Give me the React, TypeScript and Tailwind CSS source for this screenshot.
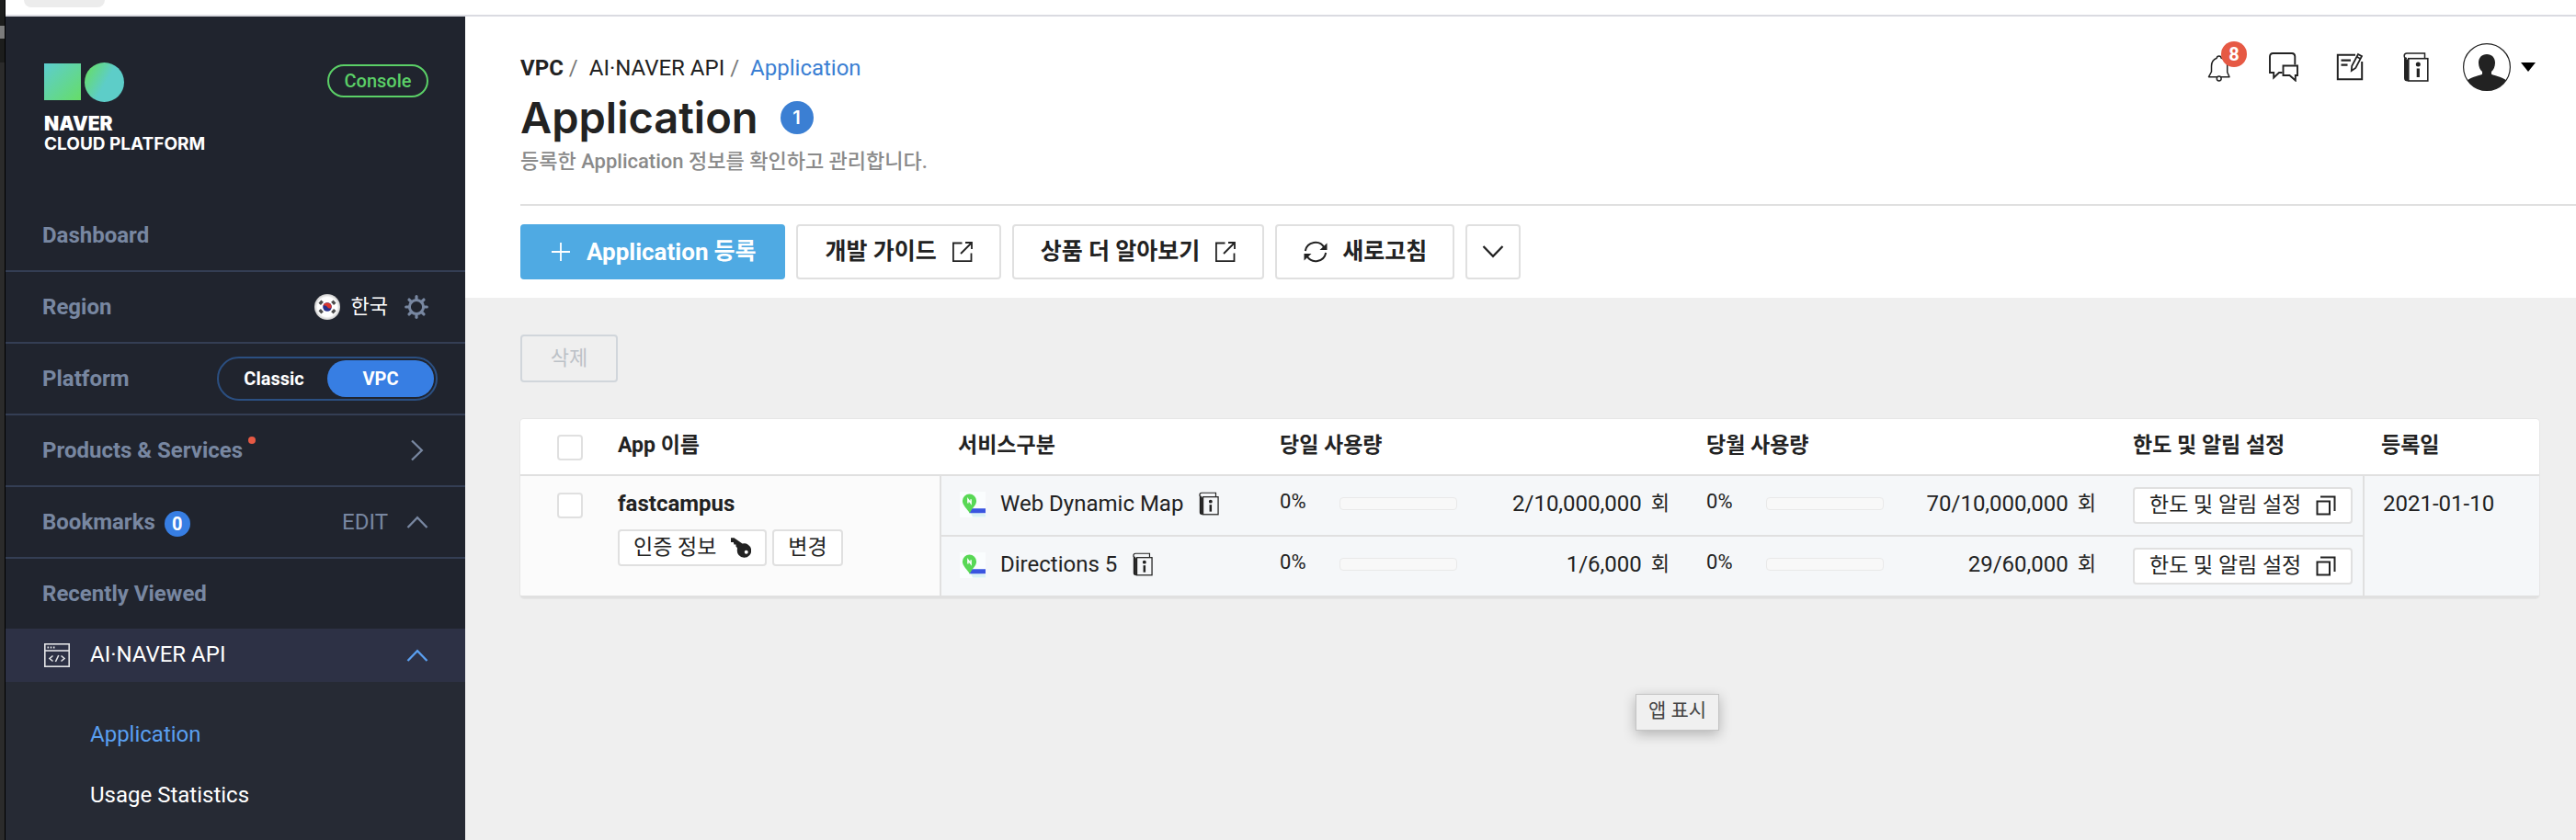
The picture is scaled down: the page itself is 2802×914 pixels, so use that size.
import React from "react";

const LATIN = "font-['Roboto','Noto_Sans_CJK_KR',sans-serif]";

type IconProps = { className?: string };

function Chevron({ className = "" }: IconProps) {
  return (
    <svg className={className} width="24" height="14" viewBox="0 0 24 14" fill="none" stroke="currentColor" strokeWidth="2.3">
      <path d="M1.500 13 12 2.200 22.500 13" />
    </svg>
  );
}

function GearIcon() {
  const teeth = [0, 45, 90, 135, 180, 225, 270, 315];
  return (
    <svg width="26" height="26" viewBox="0 0 26 26" fill="none" stroke="currentColor">
      <circle cx="13" cy="13" r="7.600" strokeWidth="3" />
      {teeth.map((a) => (
        <path key={a} d="M13 5.500V1.700" strokeWidth="3.200" strokeLinecap="round" transform={`rotate(${a} 13 13)`} />
      ))}
    </svg>
  );
}

function FlagIcon() {
  return (
    <svg width="28" height="28" viewBox="0 0 28 28">
      <defs>
        <radialGradient id="flagShade">
          <stop offset="0.750" stopColor="#ffffff" />
          <stop offset="1" stopColor="#c9c9c9" />
        </radialGradient>
      </defs>
      <circle cx="14" cy="14" r="14" fill="url(#flagShade)" />
      <circle cx="14" cy="14" r="4.800" fill="#26308a" />
      <path d="M9.300 13a4.800 4.800 0 0 1 9.400 1.200c-1.200 2-3.400 1.600-4.700-.2s-3.500-2.600-4.700-1z" fill="#d8372f" />
      <g stroke="#4b4b4b" strokeWidth="3.400">
        <path d="M5.700 10.800 8.600 7.600M19.400 7.600l2.900 3.200M5.700 17.200l2.900 3.200M19.400 20.400l2.900-3.200" />
      </g>
    </svg>
  );
}

function ApiIcon() {
  return (
    <svg width="28" height="26" viewBox="0 0 28 26" fill="none" stroke="#e3e4e6" strokeWidth="1.600">
      <rect x="0.800" y="0.800" width="26.400" height="24.400" />
      <path d="M1 8h26" />
      <path d="M3.500 4.500h1.600M6.700 4.500h1.600M9.900 4.500h1.600" strokeWidth="1.800" />
      <path d="M9.500 13.500 6 16.500l3.500 3M18.500 13.500l3.500 3-3.500 3M15.800 13l-3.400 7" />
    </svg>
  );
}

function BellIcon() {
  return (
    <svg width="32" height="32" viewBox="0 0 32 32" fill="none" stroke="#222" strokeWidth="1.500">
      <path d="M6.500 26.700H29L26.700 21.500V14.500Q26.700 8 20.300 6.300Q20 4 17.700 4T15.200 6.300Q9.500 8.500 9.500 15V21Z" strokeLinejoin="round" />
      <circle cx="17.700" cy="28.500" r="2.400" fill="#fff" />
    </svg>
  );
}

function ChatIcon() {
  return (
    <svg width="32" height="32" viewBox="0 0 32 32" fill="none" stroke="#222" strokeWidth="1.900">
      <path d="M28.300 13.500V4.500Q28.300 1 25 1H4.500Q1 1 1 4.500V22H5.200V27.500L11 22H14.500" />
      <path d="M15.500 14.500H31V25H28.800V30.500L22.500 25H15.500Z" />
    </svg>
  );
}

function NoteIcon() {
  return (
    <svg width="32" height="32" viewBox="0 0 32 32" fill="none" stroke="#222" strokeWidth="2">
      <path d="M22 2.800H2.800V29.200H29.200V10" />
      <path d="M6.500 8.700H17M6.500 13.700H13.500" strokeWidth="2.200" />
      <path d="M25 2 29 4.200 22.300 17 17.800 20 18.200 14.800Z" strokeWidth="1.800" />
      <path d="M23.600 4.800 27.600 7" strokeWidth="1.600" />
    </svg>
  );
}

function BookIcon({ className = "" }: IconProps) {
  return (
    <svg className={className} viewBox="0 0 28 32" fill="none" stroke="#222">
      <path d="M1 4v24q0 3.500 4 3.500V7.500Q1 7.500 1 4z" fill="#222" stroke="none" />
      <path d="M23.500 6.200V1H4Q1.200 1 1.200 3.800T4 6.500" strokeWidth="1.500" />
      <rect x="5.800" y="6.700" width="21" height="24.300" strokeWidth="1.600" />
      <circle cx="16.300" cy="13" r="2.500" fill="#222" stroke="none" />
      <path d="M16.300 17.500v9.500" strokeWidth="3.200" />
    </svg>
  );
}

function AvatarIcon() {
  return (
    <svg width="52" height="52" viewBox="0 0 52 52">
      <defs>
        <clipPath id="avatarClip">
          <circle cx="26" cy="26" r="25.500" />
        </clipPath>
      </defs>
      <circle cx="26" cy="26" r="25.400" fill="#fff" stroke="#222" strokeWidth="1.200" />
      <path
        clipPath="url(#avatarClip)"
        fill="#222"
        d="M26 12c5.500 0 9 3.800 9 9.200 0 4.500-1.600 7.600-4 9.800v2.800c2 1.400 10.500 2.200 16.500 6.700V54H4.500V40.500c6-4.500 14.500-5.300 16.500-6.700V31c-2.400-2.200-4-5.300-4-9.800C17 15.800 20.500 12 26 12z"
      />
    </svg>
  );
}

function ExternalIcon() {
  return (
    <svg width="24" height="24" viewBox="0 0 24 24" fill="none" stroke="#222" strokeWidth="1.800">
      <path d="M11.500 2.500H1.900V22.100H21.500V13.500" />
      <path d="M10 14 21.500 2.500M15 2H22V9" />
    </svg>
  );
}

function RefreshIcon() {
  return (
    <svg width="26" height="26" viewBox="0 0 26 26" fill="none" stroke="#222" strokeWidth="2">
      <path d="M1.800 12A11.200 11.200 0 0 1 22.500 8.500M24.200 14A11.200 11.200 0 0 1 3.500 17.500" />
      <path d="M25.500 3.500V11H17.500ZM.5 22.500V15H8.500Z" fill="#222" stroke="none" />
    </svg>
  );
}

function PopupIcon() {
  return (
    <svg width="22" height="22" viewBox="0 0 22 22" fill="none" stroke="#222" strokeWidth="2">
      <rect x="1.500" y="6.500" width="13.500" height="14" />
      <path d="M5 1.500H20.500V17" />
    </svg>
  );
}

function KeyIcon() {
  return (
    <svg width="22" height="22" viewBox="0 0 22 22">
      <path
        fillRule="evenodd"
        fill="#222"
        d="M0 .3H3.500L12.500 6.600a7.700 7.700 0 1 1-5.600 6.200V11L5.500 9.800V7.500H3.500L2.800 5H0zM16.700 13.800a2 2 0 1 0 .1 4 2 2 0 0 0-.1-4z"
      />
    </svg>
  );
}

function MapPinIcon() {
  return (
    <svg width="28" height="28" viewBox="0 0 28 28">
      <rect width="28" height="28" fill="#fafdfe" />
      <path d="M11 21 28 24.500V27.500H14z" fill="#d9f2f5" />
      <path d="M9 18.300H28V23.300H10.800z" fill="#3a55e0" />
      <path d="M10.500 2.500a7.600 7.600 0 0 1 7.600 7.600C18.100 15 13 18 10.800 23.500 8 18.500 2.900 15 2.900 10.100a7.600 7.600 0 0 1 7.600-7.600z" fill="#58d855" />
      <path d="M8.900 12.500V8.300L12.100 12.500V8.300" stroke="#fff" strokeWidth="1.500" fill="none" />
    </svg>
  );
}

function Sidebar() {
  const row = "flex h-[78px] items-center justify-between border-b-2 border-[#343e54] px-10";
  return (
    <aside className="flex w-[500px] shrink-0 flex-col bg-[#20242e] text-2xl text-[#7887a1]">
      <div className="flex h-[200px] items-start justify-between pt-[50px] pr-10 pl-[42px]">
        <a href="#home" className="block text-white">
          <svg width="88" height="44" viewBox="0 0 88 44">
            <defs>
              <linearGradient id="sq" x1="0" y1="0" x2="1" y2="1">
                <stop offset="0" stopColor="#5dcdd0" />
                <stop offset="1" stopColor="#66dd68" />
              </linearGradient>
              <linearGradient id="ci" x1="0" y1="0.200" x2="0.900" y2="0.700">
                <stop offset="0" stopColor="#66dd68" />
                <stop offset="0.600" stopColor="#5dcdc8" />
              </linearGradient>
            </defs>
            <rect y="1" width="40" height="40" fill="url(#sq)" />
            <circle cx="65.500" cy="21.500" r="21.500" fill="url(#ci)" />
          </svg>
          <span className="mt-3 block font-['Inter',sans-serif] text-[21px] leading-[22px] font-black">NAVER</span>
          <span className="block font-['Inter',sans-serif] text-[19px] leading-[22px] font-bold">CLOUD PLATFORM</span>
        </a>
        <a href="#console" className="mt-0.5 flex h-9 w-[110px] items-center justify-center rounded-full border-2 border-[#5bd067] text-xl font-medium text-[#5bd067]">
          Console
        </a>
      </div>
      <nav className="flex grow flex-col">
        <a href="#dashboard" className={row}>
          <span className="font-bold">Dashboard</span>
        </a>
        <div className={row}>
          <span className="font-bold">Region</span>
          <span className="flex items-center">
            <FlagIcon />
            <span className="mr-[18px] ml-3 text-[22px] text-white">한국</span>
            <button type="button" aria-label="Region settings"><GearIcon /></button>
          </span>
        </div>
        <div className="flex h-[78px] items-center justify-between border-b-2 border-[#343e54] pr-[30px] pl-10">
          <span className="font-bold">Platform</span>
          <div className="flex h-12 w-60 rounded-full border-2 border-[#2b4f81] p-0.5 text-xl font-bold text-white">
            <button type="button" className="grow">Classic</button>
            <button type="button" className="w-[116px] rounded-full bg-[#377ee3]">VPC</button>
          </div>
        </div>
        <a href="#products" className={row}>
          <span className="flex gap-1.5 font-bold">
            Products &amp; Services
            <span className="mt-px size-2 rounded-full bg-[#e65944]" />
          </span>
          <Chevron className="rotate-90" />
        </a>
        <div className={row}>
          <span className="flex items-center gap-2.5 font-bold">
            Bookmarks
            <span className="mt-1 flex size-7 items-center justify-center rounded-full bg-[#377ee3] text-xl text-white">0</span>
          </span>
          <span className="flex items-center gap-5">
            <button type="button">EDIT</button>
            <Chevron />
          </span>
        </div>
        <div className="flex h-[76px] items-center px-10">
          <span className="font-bold">Recently Viewed</span>
        </div>
        <a href="#ai" className="flex h-[58px] items-center bg-[#2d3145] pr-10 pl-[42px] text-white">
          <ApiIcon />
          <span className="ml-[22px] grow pb-0.5">AI·NAVER API</span>
          <Chevron className="text-[#5a9ff0]" />
        </a>
        <div className="flex grow flex-col gap-[34px] bg-[#262a34] pt-[41px] pb-6 pl-[92px]">
          <a href="#application" className="text-[#5a9ff0]">Application</a>
          <a href="#usage" className="text-white">Usage Statistics</a>
        </div>
      </nav>
    </aside>
  );
}

function PageHeader() {
  return (
    <header className="ml-[60px] flex justify-between border-b-2 border-[#e0e0e0] pr-11">
      <div className="pt-10 pb-8">
        <nav className="flex text-2xl leading-8">
          <a href="#vpc" className="font-bold">VPC</a>
          <span className="mr-3 ml-1.5 text-[#777]">/</span>
          <a href="#ai">AI·NAVER API</a>
          <span className="mr-3 ml-1.5 text-[#777]">/</span>
          <a href="#application" className="text-[#3b7fd3]">Application</a>
        </nav>
        <h1 className="mt-3 flex items-center gap-6 font-['Inter',sans-serif] text-[47px] leading-[52px] font-semibold">
          Application
          <span className="flex size-9 items-center justify-center rounded-full bg-[#3b7fd3] text-xl leading-5 text-white">1</span>
        </h1>
        <p className="mt-2 text-[22px] leading-7 font-medium text-[#8a8a8a]">등록한 Application 정보를 확인하고 관리합니다.</p>
      </div>
      <div className="flex h-[110px] items-center">
        <div className="flex items-center gap-10">
          <button type="button" aria-label="Notifications" className="relative">
            <BellIcon />
            <span className="absolute -top-3 left-5 flex size-7 items-center justify-center rounded-full bg-[#e65944] text-xl font-bold text-white">8</span>
          </button>
          <button type="button" aria-label="Chat"><ChatIcon /></button>
          <button type="button" aria-label="Notes"><NoteIcon /></button>
          <button type="button" aria-label="Guide" className="flex w-8 justify-center"><BookIcon className="h-8 w-7" /></button>
        </div>
        <button type="button" aria-label="Account" className="ml-[35px] flex items-center gap-[11px]">
          <AvatarIcon />
          <svg width="16" height="10" viewBox="0 0 16 10"><path d="M0 0h16L8 10z" fill="#000" /></svg>
        </button>
      </div>
    </header>
  );
}

function Toolbar() {
  const btn = "flex h-[60px] items-center gap-4 rounded border-2 border-[#e0e0e0] bg-white pr-7 pl-[29px] text-[25px] font-bold";
  return (
    <div className="flex gap-3 px-[60px] py-5">
      <button type="button" className="flex h-[60px] items-center rounded bg-[#4faae3] pr-8 pl-[34px] text-[25px] font-bold text-white">
        <svg className="mr-[18px]" width="20" height="20" viewBox="0 0 20 20" stroke="#fff" strokeWidth="1.800"><path d="M10 0v20M0 10h20" /></svg>
        <span className="mr-1.5 text-[26px]">Application</span> 등록
      </button>
      <button type="button" className={btn}>개발 가이드 <ExternalIcon /></button>
      <button type="button" className={btn}>상품 더 알아보기 <ExternalIcon /></button>
      <button type="button" className={btn}><RefreshIcon /> 새로고침</button>
      <button type="button" aria-label="More" className="flex size-[60px] items-center justify-center rounded border-2 border-[#e0e0e0] bg-white">
        <Chevron className="rotate-180" />
      </button>
    </div>
  );
}

type Usage = { percent: number; text: string };
type Service = { name: string; day: Usage; month: Usage };

const services: Service[] = [
  { name: "Web Dynamic Map", day: { percent: 0, text: "2/10,000,000" }, month: { percent: 0, text: "70/10,000,000" } },
  { name: "Directions 5", day: { percent: 0, text: "1/6,000" }, month: { percent: 0, text: "29/60,000" } },
];

function UsageCell({ usage }: { usage: Usage }) {
  return (
    <div className="flex pt-4 pr-5 pl-5 leading-7">
      <span className="w-[65px] text-[22px] leading-6">{usage.percent}%</span>
      <div role="progressbar" aria-label="Usage" aria-valuenow={usage.percent} className="mt-[7px] h-3.5 w-32 overflow-hidden rounded border border-[#e9e9e9] bg-[#f8f8f8]">
        <div className="h-full bg-[#4faae3]" style={{ width: `${usage.percent}%` }} />
      </div>
      <span className="grow text-right text-2xl leading-7">{usage.text}</span>
      <span className="ml-2.5 text-[22px] leading-7">회</span>
    </div>
  );
}

function ServiceCells({ service, last }: { service: Service; last: boolean }) {
  const cell = last ? "h-16 bg-[#f5f7f9] p-0 align-top" : "h-[66px] border-b-2 border-[#e0e0e0] bg-[#f5f7f9] p-0 align-top";
  return (
    <>
      <td className={`${cell} border-l-2 border-l-[#e0e0e0]`}>
        <div className="flex items-start pt-[17px] pl-5">
          <MapPinIcon />
          <span className="ml-4 text-2xl leading-[26px]">{service.name}</span>
          <button type="button" aria-label={`${service.name} guide`} className="ml-[17px]"><BookIcon className="h-[26px] w-[22px]" /></button>
        </div>
      </td>
      <td className={cell}><UsageCell usage={service.day} /></td>
      <td className={cell}><UsageCell usage={service.month} /></td>
      <td className={cell}>
        <div className="flex pt-3 pl-5">
          <button type="button" className="flex h-10 items-center gap-4 rounded border-2 border-[#e0e0e0] bg-white px-4 text-[23px]">
            한도 및 알림 설정 <PopupIcon />
          </button>
        </div>
      </td>
    </>
  );
}

function AppTable() {
  const th = "border-b-2 border-[#e0e0e0] pt-0 pr-0 pb-0.5 pl-5 text-left text-[23px] font-bold";
  const box = "block size-7 appearance-none rounded border-2 border-[#e0e0e0] bg-white";
  const small = "flex h-10 items-center gap-4 rounded border-2 border-[#e0e0e0] bg-white px-[15px] text-[23px]";
  return (
    <div className="mt-10 overflow-hidden rounded border-b-3 border-[#e0e0e0] shadow-[0_0_0_1px_#e6e6e6]">
      <table className="w-full table-fixed border-separate border-spacing-0">
        <colgroup>
          <col className="w-[106px]" />
          <col />
          <col />
          <col className="w-[464px]" />
          <col className="w-[464px]" />
          <col className="w-[270px]" />
          <col className="w-[192px]" />
        </colgroup>
        <thead>
          <tr className="h-[62px] bg-white">
            <th className="border-b-2 border-[#e0e0e0] pt-0.5 pl-10"><input type="checkbox" aria-label="Select all" className={box} /></th>
            <th className="border-b-2 border-[#e0e0e0] p-0 pb-0.5 text-left text-[23px] font-bold">App 이름</th>
            <th className={th}>서비스구분</th>
            <th className={th}>당일 사용량</th>
            <th className={th}>당월 사용량</th>
            <th className={th}>한도 및 알림 설정</th>
            <th className={th}>등록일</th>
          </tr>
        </thead>
        <tbody>
          {services.map((s, i) => (
            <tr key={s.name}>
              {i === 0 && (
                <>
                  <td rowSpan={2} className="bg-[#fbfbfb] pt-[18px] pl-10 align-top"><input type="checkbox" aria-label="Select fastcampus" className={box} /></td>
                  <td rowSpan={2} className="bg-[#fbfbfb] p-0 pt-4 align-top">
                    <a href="#fastcampus" className="block text-2xl leading-7 font-bold">fastcampus</a>
                    <div className="mt-3.5 flex gap-1.5">
                      <button type="button" className={small}>인증 정보 <KeyIcon /></button>
                      <button type="button" className={small}>변경</button>
                    </div>
                  </td>
                </>
              )}
              <ServiceCells service={s} last={i === services.length - 1} />
              {i === 0 && (
                <td rowSpan={2} className="border-l-2 border-[#e0e0e0] bg-[#f5f7f9] p-0 pt-4 pl-5 align-top text-2xl leading-7">2021-01-10</td>
              )}
            </tr>
          ))}
        </tbody>
      </table>
    </div>
  );
}

export default function App() {
  return (
    <div className={`flex min-h-screen bg-[#efefef] text-[#222] ${LATIN}`}>
      <div className="flex w-1.5 shrink-0 flex-col border-r border-black bg-[#2b2b2b]">
        <div className="h-7 bg-[#1c1d1c]" />
        <div className="h-3.5 bg-[#7b7b7b]" />
        <div className="h-[26px] bg-[#1c1d1c]" />
      </div>
      <div className="flex min-w-0 grow flex-col">
        <div className="flex h-[18px] items-start border-b-2 border-[#dadbe1] bg-white pl-5">
          <div className="h-2 w-[88px] rounded-b-full bg-[#ececec]" />
        </div>
        <div className="flex grow">
          <Sidebar />
          <main className="relative min-w-0 grow">
            <div className="bg-white">
              <PageHeader />
              <Toolbar />
            </div>
            <div className="pt-10 pr-10 pl-[60px]">
              <button type="button" disabled className="h-[52px] w-[106px] rounded border-2 border-[#d1d6db] pb-0.5 text-[22px] text-[#bcc1c7]">삭제</button>
              <AppTable />
            </div>
            <div role="tooltip" className="absolute top-[737px] left-[1273px] border border-[#c4c4c4] bg-[#f0f0f0] px-[13px] pt-1 pb-2 text-[21px] leading-[26px] text-[#444] shadow-[0_4px_14px_rgba(0,0,0,0.25)]">
              앱 표시
            </div>
          </main>
        </div>
      </div>
    </div>
  );
}
